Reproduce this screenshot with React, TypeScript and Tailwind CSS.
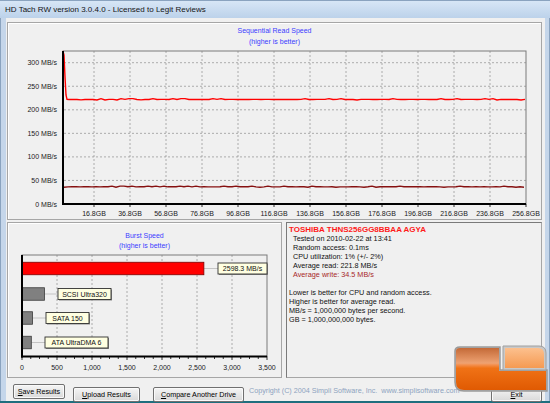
import React from "react";

function rng(seed: number) {
  let s = seed;
  return () => {
    s = (s * 1103515245 + 12345) % 2147483648;
    return s / 2147483648;
  };
}

// noisy flat trace, mostly level with small bumps
function trace(x0: number, x1: number, base: number, amp: number, seed: number) {
  const r = rng(seed);
  const pts: string[] = [];
  for (let x = x0; x <= x1; x += 4) {
    const v = r();
    const d = v < 0.18 ? -amp : v > 0.9 ? amp * 0.6 : (v - 0.55) * 0.3;
    pts.push(`${x},${(base + d).toFixed(2)}`);
  }
  return pts.join(" ");
}

const seqY = (v: number) => 157 - v * 0.471;
const seqGrid = Array.from({ length: 13 }, (_, k) => 86 + 36 * k);
const seqLabels = ["16.8GB", "36.8GB", "56.8GB", "76.8GB", "96.8GB", "116.8GB", "136.8GB", "156.8GB", "176.8GB", "196.8GB", "216.8GB", "236.8GB", "256.8GB"];

function SequentialChart() {
  const readLine = "55,4 56,8 57,30 58,48 59," + seqY(222).toFixed(1) + " " + trace(61, 518, seqY(222), 0.8, 7);
  const writeLine = trace(56, 518, seqY(36.5), 0.7, 31);
  return (
    <svg width={533} height={172} className="block" fontFamily="'Liberation Sans', Arial, sans-serif" fontSize={7}>
      {[50, 100, 150, 200, 250, 300].map((v) => (
        <line key={v} x1={56} x2={518} y1={seqY(v)} y2={seqY(v)} stroke="#9a9a9a" strokeWidth={0.8} strokeDasharray="2 2" />
      ))}
      {seqGrid.slice(0, 12).map((x) => (
        <line key={x} x1={x} x2={x} y1={4} y2={157} stroke="#9a9a9a" strokeWidth={0.8} strokeDasharray="2 2" />
      ))}
      <rect x={55} y={4} width={463} height={153} fill="none" stroke="#7a7a7a" strokeWidth={1} />
      {seqGrid.map((x) => (
        <line key={"t" + x} x1={x} x2={x} y1={157} y2={160} stroke="#000" strokeWidth={0.8} />
      ))}
      <polyline points={writeLine} fill="none" stroke="#861010" strokeWidth={1.4} />
      <polyline points={readLine} fill="none" stroke="#ff0000" strokeWidth={1.4} />
      <line x1={55} x2={55} y1={4} y2={158} stroke="#000" strokeWidth={2} />
      <line x1={54} x2={518} y1={157} y2={157} stroke="#000" strokeWidth={2} />
      {[0, 50, 100, 150, 200, 250, 300].map((v) => (
        <text key={"l" + v} x={49} y={seqY(v)} textAnchor="end" dominantBaseline="central" fill="#1a1a1a">
          {v} MB/s
        </text>
      ))}
      {seqLabels.map((l, i) => (
        <text key={l} x={seqGrid[i]} y={166} textAnchor="middle" dominantBaseline="central" fill="#1a1a1a">
          {l}
        </text>
      ))}
    </svg>
  );
}

const bx = (v: number) => 14 + v * 0.07;

const bursts = [
  { c: 17.5, v: 2598.3, red: true, label: "2598.3 MB/s", x0: 210, x1: 259 },
  { c: 43, v: 320, red: false, label: "SCSI Ultra320", x0: 50, x1: 103 },
  { c: 67, v: 150, red: false, label: "SATA 150", x0: 38, x1: 81 },
  { c: 91.5, v: 133, red: false, label: "ATA UltraDMA 6", x0: 37, x1: 100 },
];

function BurstChart() {
  return (
    <svg width={273} height={126} className="block" fontFamily="'Liberation Sans', Arial, sans-serif" fontSize={7}>
      {[500, 1000, 1500, 2000, 2500, 3000].map((v) => (
        <line key={v} x1={bx(v)} x2={bx(v)} y1={4} y2={105.5} stroke="#9a9a9a" strokeWidth={0.8} strokeDasharray="2 2" />
      ))}
      <rect x={14} y={4} width={245} height={101.5} fill="none" stroke="#7a7a7a" strokeWidth={1} />
      {Array.from({ length: 29 }, (_, k) => (
        <line key={k} x1={bx(k * 125)} x2={bx(k * 125)} y1={105.5} y2={k % 4 === 0 ? 109 : 108} stroke="#000" strokeWidth={0.8} />
      ))}
      {bursts.map((b) => (
        <g key={b.label}>
          <line x1={bx(b.v)} x2={b.x0} y1={b.c} y2={b.c} stroke="#c4c4c4" strokeWidth={1} />
          <rect
            x={14}
            y={b.c - 6.25}
            width={b.v * 0.07}
            height={12.5}
            fill={b.red ? "#ff0000" : "#808080"}
            stroke={b.red ? "#7a0000" : "#3a3a3a"}
            strokeWidth={0.8}
          />
          <rect x={b.x0 + 1} y={b.c - 4.5} width={b.x1 - b.x0} height={11} fill="#8a8a8a" />
          <rect x={b.x0} y={b.c - 5.5} width={b.x1 - b.x0} height={11} fill="#ffffe1" stroke="#303030" strokeWidth={0.9} />
          <text x={(b.x0 + b.x1) / 2} y={b.c + 0.3} textAnchor="middle" dominantBaseline="central" fill="#111">
            {b.label}
          </text>
        </g>
      ))}
      <line x1={14} x2={14} y1={4} y2={106.5} stroke="#000" strokeWidth={2} />
      <line x1={13} x2={259} y1={105.5} y2={105.5} stroke="#000" strokeWidth={2} />
      {[0, 500, 1000, 1500, 2000, 2500, 3000, 3500].map((v) => (
        <text key={"x" + v} x={bx(v)} y={116} textAnchor="middle" dominantBaseline="central" fill="#1a1a1a">
          {v.toLocaleString("en-US")}
        </text>
      ))}
    </svg>
  );
}

function Logo() {
  return (
    <svg width={98} height={54} className="absolute left-[450px] top-[342px]" viewBox="0 0 98 54">
      <defs>
        <linearGradient id="main" x1="0" y1="0" x2="0" y2="1">
          <stop offset="0%" stopColor="#c46a38" />
          <stop offset="36%" stopColor="#eea272" />
          <stop offset="40%" stopColor="#f49050" />
          <stop offset="48%" stopColor="#f07216" />
          <stop offset="100%" stopColor="#e05a02" />
        </linearGradient>
        <linearGradient id="small" x1="0" y1="0" x2="0" y2="1">
          <stop offset="0%" stopColor="#fcc08e" />
          <stop offset="100%" stopColor="#f59a52" />
        </linearGradient>
      </defs>
      <path d="M10,5 H50 V28 H97 V49 H14 Q5,49 5,40 V9 Q5,5 10,5 Z" fill="#b8b8b8" stroke="#9a9a9a" strokeWidth={1.5} />
      <path d="M53,4 H89 Q96,4 96,11 V28 H53 Z" fill="#c8c8c8" stroke="#a0a0a0" strokeWidth={1} />
      <path d="M10,6 H49 V29 H96 V48 H14 Q6,48 6,40 V9 Q6,6 10,6 Z" fill="url(#main)" />
      <path d="M55,6 H88 Q94,6 94,12 V26 H55 Z" fill="url(#small)" />
    </svg>
  );
}

function Btn({ w, hot, rest }: { w: string; hot: string; rest: string }) {
  return (
    <button
      className={`${w} h-[15px] shrink-0 rounded-[2px] border border-[#707070] bg-linear-to-b from-[#f5f5f5] to-[#d9d9d9] text-[7.2px] leading-none text-black shadow-[inset_0_0_0_1px_#fafafa]`}
    >
      <span className="underline">{hot}</span>
      {rest}
    </button>
  );
}

export default function App() {
  return (
    <div className="relative h-[403px] w-[550px] overflow-hidden bg-[#c5d6ea] font-['Liberation_Sans',Arial,sans-serif]">
      <div className="flex h-[18px] items-center border-t border-[#8aa3bf] bg-linear-to-b from-[#d7e6f6] to-[#bcd2ea] pl-[5px] text-[8px] text-[#151515]">
        HD Tach RW version 3.0.4.0 - Licensed to Legit Reviews
      </div>
      <div className="flex h-[383px]">
        <div className="w-[6px] border-l border-[#8aa3bf]" />
        <div className="flex flex-1 flex-col bg-[#f0f0f0] pl-[1px] pr-[3px] pt-[4px]">
          <div className="h-[198px] border border-[#a6a6a6] shadow-[inset_1px_1px_0_#ffffff]">
            <div className="pt-[3px] text-center text-[7px] leading-[10.5px] text-[#3c3cff]">
              <div>Sequential Read Speed</div>
              <div>(higher is better)</div>
            </div>
            <SequentialChart />
          </div>
          <div className="mt-[2px] flex h-[156px] gap-[4px]">
            <div className="w-[275px] border border-[#a6a6a6] shadow-[inset_1px_1px_0_#ffffff]">
              <div className="pt-[8px] text-center text-[7px] leading-[10px] text-[#3c3cff]">
                <div>Burst Speed</div>
                <div>(higher is better)</div>
              </div>
              <BurstChart />
            </div>
            <div className="flex-1 border border-t-[#7a7a7a] border-l-[#7a7a7a] border-r-[#a6a6a6] border-b-[#a6a6a6] pl-[2px] pt-[1.5px] text-[7.25px] leading-[9px] text-[#111]">
              <div className="text-[8px] font-bold text-[#ff1a1a]">TOSHIBA THNS256GG8BBAA AGYA</div>
              <div className="pl-[4px]">
                <div>Tested on 2010-02-22 at 13:41</div>
                <div>Random access: 0.1ms</div>
                <div>CPU utilization: 1% (+/- 2%)</div>
                <div>Average read: 221.8 MB/s</div>
                <div className="text-[#a82828]">Average write: 34.5 MB/s</div>
              </div>
              <div className="mt-[9px]">
                <div>Lower is better for CPU and random access.</div>
                <div>Higher is better for average read.</div>
                <div>MB/s = 1,000,000 bytes per second.</div>
                <div>GB = 1,000,000,000 bytes.</div>
              </div>
            </div>
          </div>
          <div className="mt-[6px] flex h-[15px] items-center pl-[6px]">
            <Btn w="w-[52px]" hot="S" rest="ave Results" />
            <div className="ml-[8px]">
              <Btn w="w-[67px]" hot="U" rest="pload Results" />
            </div>
            <div className="ml-[13px]">
              <Btn w="w-[91px]" hot="C" rest="ompare Another Drive" />
            </div>
            <div className="ml-[5px] whitespace-nowrap text-[7.2px] text-[#8ea3bf]">
              Copyright (C) 2004 Simpli Software, Inc.&nbsp; www.simplisoftware.com
            </div>
            <div className="ml-auto">
              <Btn w="w-[51px]" hot="E" rest="xit" />
            </div>
          </div>
        </div>
        <div className="w-[5px] border-r border-[#8aa3bf]" />
      </div>
      <div className="h-[2px] bg-[#1e6e7e]" />
      <Logo />
    </div>
  );
}
